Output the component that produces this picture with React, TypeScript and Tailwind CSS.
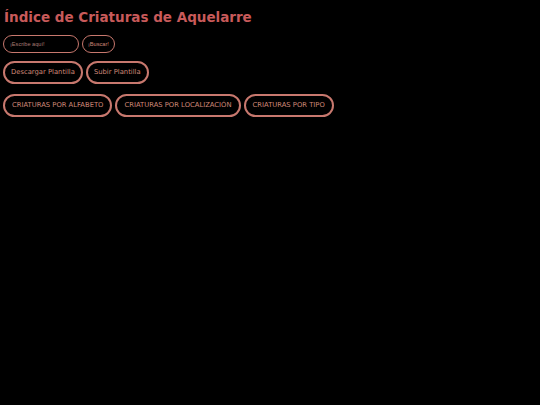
export default function App() {
  const categorias = ['CRIATURAS POR ALFABETO', 'CRIATURAS POR LOCALIZACIÓN', 'CRIATURAS POR TIPO'];

  return (
    <div className="min-h-[405px] bg-black px-[3px] pt-[6px] text-[#c85a5a]">
      <h1 className="text-[13.5px] font-bold leading-[22px] pl-[1px]" style={{ fontFamily: '"DejaVu Sans", sans-serif' }}>
        Índice de Criaturas de Aquelarre
      </h1>

      {/* buscador */}
      <div className="mt-[7px] flex gap-[3px]" style={{ fontFamily: '"Liberation Sans", sans-serif' }}>
        <input
          className="h-[18px] w-[76px] rounded-[9px] border border-[#c8786e] bg-black px-[6px] text-[5.6px] text-[#c85a5a] outline-none placeholder:text-[#a87a72]"
          placeholder="¡Escribe aquí!"
        />
        <button className="h-[18px] rounded-[9px] border border-[#c8786e] bg-black px-[5px] text-[5.6px] text-[#d08878]">
          ¡Buscar!
        </button>
      </div>

      {/* plantilla */}
      <div className="mt-[8px] flex gap-[3px]" style={{ fontFamily: '"DejaVu Sans", sans-serif' }}>
        <button className="h-[23px] rounded-[12px] border-2 border-[#c8786e] bg-black px-[6px] text-[6.8px] text-[#d08878]">
          Descargar Plantilla
        </button>
        <button className="h-[23px] rounded-[12px] border-2 border-[#c8786e] bg-black px-[6px] text-[6.8px] text-[#d08878]">
          Subir Plantilla
        </button>
      </div>

      {/* categorías */}
      <div className="mt-[10px] flex gap-[3px]" style={{ fontFamily: '"DejaVu Sans", sans-serif' }}>
        {categorias.map(c => (
          <button key={c} className="h-[23px] rounded-[12px] border-2 border-[#c8786e] bg-black px-[7px] text-[6.8px] text-[#d08878]">
            {c}
          </button>
        ))}
      </div>
    </div>
  );
}
